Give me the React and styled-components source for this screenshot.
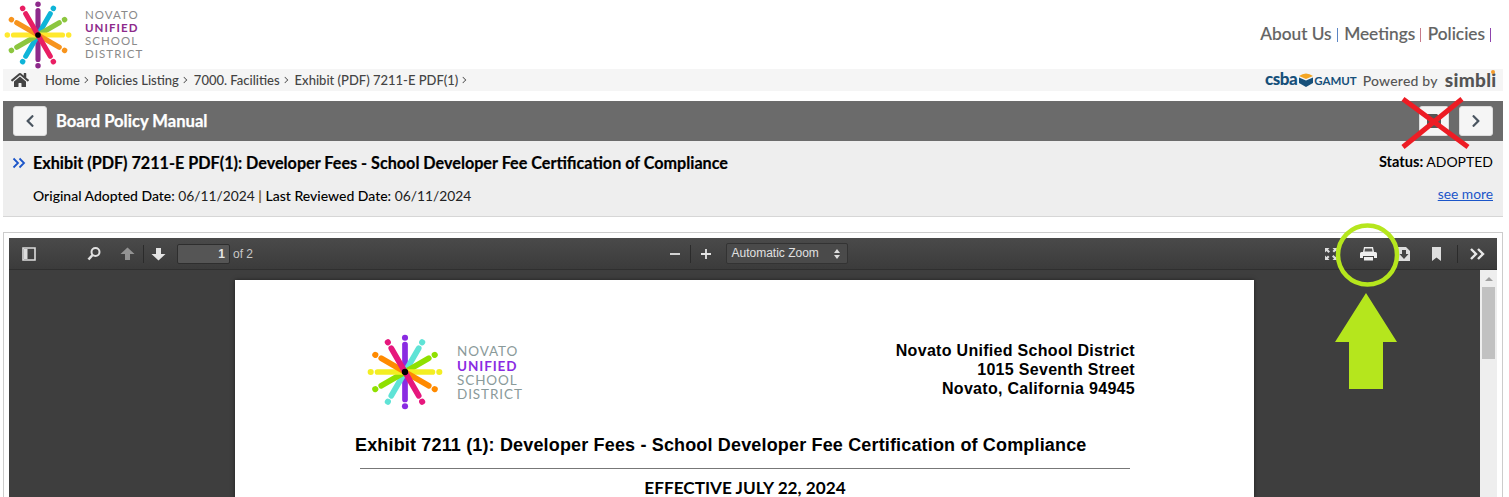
import styled, { createGlobalStyle } from 'styled-components';
import { FaHome, FaChevronLeft, FaChevronRight } from 'react-icons/fa';

const GlobalStyle = createGlobalStyle`
  html, body {
    margin: 0;
    height: 497px;
    overflow: hidden;
    background: #fff;
    font-family: 'Lato', 'Liberation Sans', sans-serif;
  }
`;

const Page = styled.div`
  position: relative;
  width: 1509px;
  height: 497px;
  overflow: hidden;
  padding: 0 6px 0 3px;
  box-sizing: border-box;
`;

const Header = styled.header`
  height: 69px;
  display: flex;
  justify-content: space-between;
  align-items: center;
  padding: 0 12px 0 1px;
`;

const LogoWrap = styled.div`
  display: flex;
  align-items: center;
  gap: ${(p) => p.$gap}px;
`;

const LogoText = styled.div`
  font-family: 'Lato', sans-serif;
  font-size: ${(p) => p.$size}px;
  line-height: ${(p) => p.$line}px;
  letter-spacing: ${(p) => p.$track}px;
  color: ${(p) => p.$color};
  margin-top: ${(p) => p.$shift}px;
  span {
    display: block;
    font-weight: 700;
    color: ${(p) => p.$accent};
  }
`;

const Nav = styled.nav`
  display: flex;
  align-items: center;
  font-size: 17.3px;
  font-weight: 500;
  color: #636363;
  padding-bottom: 2px;
  -webkit-text-stroke: 0.15px #636363;
`;

const NavSep = styled.i`
  display: inline-block;
  width: 1px;
  height: 14px;
  margin: 2px 6.5px 0 5px;
  background: ${(p) => p.$color};
  &:last-child {
    margin-right: 0;
  }
`;

const Crumbs = styled.div`
  height: 22px;
  background: #f5f5f5;
  display: flex;
  align-items: center;
  justify-content: space-between;
  padding: 0 6.5px 0 8px;
  font-size: 13px;
  font-weight: 500;
  color: #444;
`;

const CrumbList = styled.div`
  display: flex;
  align-items: center;
  svg {
    color: #444;
  }
`;

const CrumbLinks = styled.div`
  display: flex;
  align-items: center;
  margin-left: 16px;
`;

const CrumbArrow = styled.span`
  width: 6px;
  height: 6px;
  margin: 0 7px 0 2px;
  transform: scale(0.75) rotate(45deg);
  border-top: 1.5px solid #444;
  border-right: 1.5px solid #444;
  box-sizing: border-box;
`;

const Brand = styled.div`
  display: flex;
  align-items: center;
`;

const Csba = styled.span`
  font-size: 17px;
  font-weight: 900;
  color: #17507a;
  letter-spacing: -0.5px;
  line-height: 16px;
  padding-bottom: 3px;
`;

const Gamut = styled.span`
  font-size: 11.5px;
  font-weight: 700;
  color: #17507a;
`;

const Powered = styled.span`
  font-size: 14px;
  font-weight: 500;
  color: #555;
  letter-spacing: 0.2px;
  margin-left: 6px;
`;

const Simbli = styled.span`
  position: relative;
  font-size: 19px;
  line-height: 18px;
  font-weight: 900;
  color: #555;
  margin-left: 7px;
  letter-spacing: 0.3px;
`;

const SimbliDot = styled.span`
  position: absolute;
  right: 2px;
  top: -1px;
  width: 4px;
  height: 4px;
  border-radius: 50%;
  background: #f39c2d;
`;

const TitleBar = styled.div`
  margin-top: 10px;
  height: 40px;
  background: #6b6b6b;
  display: flex;
  align-items: center;
  justify-content: space-between;
  padding: 0 10px;
`;

const BarGroup = styled.div`
  display: flex;
  align-items: center;
  gap: ${(p) => p.$gap}px;
`;

const SquareButton = styled.button`
  width: ${(p) => p.$w || 34}px;
  height: 30px;
  padding: 0;
  display: flex;
  align-items: center;
  justify-content: center;
  background: #f5f5f5;
  border: 1px solid #ddd;
  border-radius: 3px;
  color: #4a5560;
  font-size: 14px;
`;

const BarTitle = styled.h1`
  margin: 0;
  font-size: 16.6px;
  font-weight: 700;
  color: #fff;
  -webkit-text-stroke: 0.25px #fff;
`;

const Info = styled.section`
  height: 76px;
  box-sizing: border-box;
  background: #eee;
  border-bottom: 1px solid #d6d6d6;
  padding: 12px 10px 0 9px;
  display: grid;
  grid-template-columns: 1fr auto;
  grid-template-rows: 34px auto;
  color: #000;
`;

const InfoTitle = styled.div`
  display: flex;
  align-items: center;
  height: 19px;
  font-size: 16.18px;
  font-weight: 700;
  -webkit-text-stroke: 0.2px #000;
  svg {
    margin-right: 7px;
  }
`;

const Status = styled.div`
  font-size: 14px;
  line-height: 17px;
  text-align: right;
  b {
    font-size: 14.6px;
    font-weight: 700;
  }
`;

const DateLine = styled.div`
  padding-left: 21px;
  font-size: 13.8px;
  color: #222;
  b {
    font-size: 14px;
    font-weight: 500;
    color: #000;
  }
  i {
    font-style: normal;
    font-weight: 700;
    color: #7a5a1e;
  }
`;

const SeeMore = styled.a`
  margin-top: -2px;
  font-size: 13.8px;
  color: #1b55c9;
  text-decoration: underline;
  text-align: right;
`;

const Frame = styled.div`
  margin-top: 15px;
  height: 280px;
  box-sizing: border-box;
  border: 1px solid #ccc;
  padding: 5px;
`;

const Viewer = styled.div`
  height: 100%;
  display: grid;
  grid-template-rows: 32px 1fr;
  background: #3e3e3e;
`;

const Toolbar = styled.div`
  display: grid;
  grid-template-columns: 1fr auto 1fr;
  align-items: center;
  background: linear-gradient(#4a4a4a, #3b3b3b);
  border-bottom: 1px solid #2f2f2f;
  box-sizing: border-box;
  color: #d9d9d9;
  font-family: 'Liberation Sans', sans-serif;
  font-size: 12px;
`;

const ToolGroup = styled.div`
  display: flex;
  align-items: center;
  justify-content: ${(p) => p.$end ? 'flex-end' : 'flex-start'};
  padding: ${(p) => p.$end ? '0 10px 0 0' : '0'};
`;

const CenterGroup = styled(ToolGroup)`
  margin-left: 6px;
`;

const ToolIcon = styled.span`
  display: flex;
  justify-content: center;
  width: ${(p) => p.$w || 20}px;
  margin-left: ${(p) => p.$ml || 0}px;
  opacity: ${(p) => p.$dim ? 0.5 : 1};
`;

const ToolDivider = styled.span`
  width: 1px;
  height: 18px;
  margin-left: ${(p) => p.$ml || 0}px;
  background: #2b2b2b;
`;

const PageInput = styled.span`
  width: 53px;
  height: 20px;
  margin-left: 9px;
  box-sizing: border-box;
  border: 1px solid #2e2e2e;
  border-radius: 2px;
  background: #555;
  text-align: right;
  line-height: 18px;
  padding-right: 4px;
  font-weight: 700;
  color: #e6e6e6;
`;

const PageCount = styled.span`
  margin-left: 3px;
  color: #c8c8c8;
`;

const ZoomSelect = styled.span`
  width: 122px;
  height: 21px;
  margin-left: 10px;
  box-sizing: border-box;
  border: 1px solid #333;
  border-radius: 2px;
  background: #4a4a4a;
  line-height: 19px;
  padding-left: 5px;
  display: flex;
  justify-content: space-between;
  padding-right: 7px;
  align-items: center;
  color: #e0e0e0;
`;

const Canvas = styled.div`
  display: flex;
  min-height: 0;
  overflow: hidden;
`;

const CanvasArea = styled.div`
  flex: 1;
  padding: 10px 226px 0 226px;
  min-width: 0;
`;

const Sheet = styled.div`
  height: 400px;
  background: #fff;
  box-shadow: 0 0 4px rgba(0, 0, 0, 0.5);
  padding: 54px 119px 0 120px;
  color: #000;
  font-family: 'Liberation Sans', sans-serif;
`;

const SheetTop = styled.div`
  display: flex;
  justify-content: space-between;
  align-items: flex-start;
  margin-left: 11.5px;
`;

const Address = styled.div`
  font-size: 16px;
  font-weight: 700;
  line-height: 19px;
  text-align: right;
  padding-top: 7px;
  letter-spacing: 0.3px;
`;

const SheetHeading = styled.h2`
  margin: 25px 0 0;
  font-size: 18px;
  font-weight: 700;
  line-height: 20px;
  letter-spacing: 0.16px;
  white-space: nowrap;
`;

const Rule = styled.hr`
  margin: 13px 5px 0;
  border: 0;
  border-top: 1px solid #777;
`;

const Effective = styled.div`
  margin-top: 8px;
  text-align: center;
  font-family: 'Lato', sans-serif;
  font-size: 17.2px;
  font-weight: 700;
`;

const ScrollTrack = styled.div`
  width: 17px;
  background: #eee;
  display: flex;
  flex-direction: column;
  align-items: center;
  padding-top: 7px;
  box-sizing: border-box;
`;

const ScrollArrow = styled.span`
  width: 0;
  height: 0;
  border-left: 4px solid transparent;
  border-right: 4px solid transparent;
  border-bottom: 4px solid #a0a0a0;
`;

const ScrollThumb = styled.span`
  width: 13px;
  height: 72px;
  margin-top: 6px;
  background: #c1c1c1;
`;

const Markup = styled.svg`
  position: absolute;
  left: 0;
  top: 0;
  pointer-events: none;
`;

const spokeColors = {
  top: ['#8e2a8b', '#0eb4d8', '#8cc63f', '#ffe92e', '#f7941d', '#e91e63'],
  sheet: ['#8a2be2', '#5fe3d6', '#8fe000', '#f3ee22', '#ff8a00', '#e6177d'],
};

const Logo = ({ size, colors }) => (
  <svg width={size} height={size} viewBox="-36 -36 72 72">
    {colors.map((c, i) => (
      <g key={c} transform={`rotate(${i * 30})`}>
        <line x1="0" y1="-26" x2="0" y2="26" stroke={c} strokeWidth="5.4" strokeLinecap="round" />
        <circle cx="0" cy="-32.5" r="2.9" fill={c} />
        <circle cx="0" cy="32.5" r="2.9" fill={c} />
      </g>
    ))}
    <circle r="3" fill="#000" />
  </svg>
);

const Shield = () => (
  <svg width="16" height="16" viewBox="0 0 16 16" style={{ margin: '0 0 0 1px' }}>
    <path d="M1 4 Q8 -1 15 4 L8 7 Z" fill="#f5a623" />
    <path d="M1 5.5 L8 8.5 L15 5.5 V11 L8 15 L1 11 Z" fill="#17507a" />
  </svg>
);

const SidebarIcon = () => (
  <svg width="14" height="14" viewBox="0 0 14 14">
    <path d="M1 1h12v12H1z" fill="none" stroke="#ddd" strokeWidth="1.6" />
    <path d="M2 2h3.5v10H2z" fill="#ddd" />
  </svg>
);

const SearchIcon = () => (
  <svg width="16" height="16" viewBox="0 0 16 16">
    <circle cx="9.5" cy="6" r="4" fill="none" stroke="#e2e2e2" strokeWidth="2" />
    <path d="M6.5 9 L2.5 13.5" stroke="#e2e2e2" strokeWidth="2.6" />
  </svg>
);

const ArrowIcon = ({ down }) => (
  <svg width="15" height="14" viewBox="0 0 15 14">
    <path
      d={down ? 'M5 1h5v6h4.5L7.5 13.5 .5 7H5z' : 'M5 13h5V7h4.5L7.5 .5 .5 7H5z'}
      fill="#e4e4e4"
    />
  </svg>
);

const FullscreenIcon = () => (
  <svg width="14" height="14" viewBox="0 0 14 14">
    <path d="M1 1h4.500L4 2.500 6 4.500 4.500 6 2.500 4 1 5.500zM13 13H8.500L10 11.500 8 9.500 9.500 8l2 2L13 8.500z" fill="#ddd" />
    <path d="M13 1v4.500L11.500 4 10 5.500 8.500 4 10 2.500 8.500 1zM1 13V8.500L2.500 10 4 8.500 5.500 10 4 11.500 5.500 13z" fill="#ddd" />
  </svg>
);

const PrintIcon = () => (
  <svg width="17" height="14" viewBox="0 0 17 14">
    <path d="M4 0h9l1 5H3z" fill="#eee" />
    <path d="M5 1.500h7l.5 3h-8z" fill="#555" />
    <path d="M1.500 5h14A1.500 1.500 0 0 1 17 6.500V11h-3V9H3v2H0V6.500A1.500 1.500 0 0 1 1.500 5z" fill="#eee" />
    <path d="M4 10h9v3.500H4z" fill="#eee" />
  </svg>
);

const DownloadIcon = () => (
  <svg width="14" height="14" viewBox="0 0 14 14">
    <path d="M1 0h8l4 4v10H1z" fill="#ddd" />
    <path d="M5 3h4v4h2.500L7 12 2.500 7H5z" fill="#444" />
  </svg>
);

const BookmarkIcon = () => (
  <svg width="10" height="14" viewBox="0 0 10 14">
    <path d="M0 0h9v14L4.500 10.500 0 14z" fill="#ddd" />
  </svg>
);

const MoreIcon = () => (
  <svg width="15" height="12" viewBox="0 0 15 12">
    <path d="M1 1l5 5-5 5M8 1l5 5-5 5" fill="none" stroke="#e8e8e8" strokeWidth="2.400" />
  </svg>
);

const App = () => (
  <Page>
    <GlobalStyle />
    <Header>
      <LogoWrap $gap={13}>
        <Logo size={68} colors={spokeColors.top} />
        <LogoText $size={11.5} $line={13} $track={1.05} $shift={-2} $color="#8a8a8a" $accent="#8e2a8b">
          NOVATO
          <span>UNIFIED</span>
          SCHOOL<br />DISTRICT
        </LogoText>
      </LogoWrap>
      <Nav>
        About Us<NavSep $color="#5b86c4" />
        Meetings<NavSep $color="#c77a8a" />
        Policies<NavSep $color="#8e44ad" />
      </Nav>
    </Header>

    <Crumbs>
      <CrumbList>
        <FaHome size={18} />
        <CrumbLinks>
          Home<CrumbArrow />
          Policies Listing<CrumbArrow />
          7000. Facilities<CrumbArrow />
          Exhibit (PDF) 7211-E PDF(1)<CrumbArrow />
        </CrumbLinks>
      </CrumbList>
      <Brand>
        <Csba>csba</Csba>
        <Shield />
        <Gamut>GAMUT</Gamut>
        <Powered>Powered by</Powered>
        <Simbli>simbli<SimbliDot /></Simbli>
      </Brand>
    </Crumbs>

    <TitleBar>
      <BarGroup $gap={9}>
        <SquareButton><FaChevronLeft /></SquareButton>
        <BarTitle>Board Policy Manual</BarTitle>
      </BarGroup>
      <BarGroup $gap={10}>
        <SquareButton $w={30}>
          <svg width="16" height="16" viewBox="0 0 16 16">
            <path d="M1 1h10l4 4v10H1z" fill="#555" />
          </svg>
        </SquareButton>
        <SquareButton><FaChevronRight /></SquareButton>
      </BarGroup>
    </TitleBar>

    <Info>
      <InfoTitle>
        <svg width="14" height="12" viewBox="0 0 14 12">
          <path d="M1.500 1.500L6 6l-4.500 4.500M7.500 1.500L12 6l-4.500 4.500" fill="none" stroke="#1b55c9" strokeWidth="1.800" />
        </svg>
        Exhibit (PDF) 7211-E PDF(1): Developer Fees - School Developer Fee Certification of Compliance
      </InfoTitle>
      <Status><b>Status:</b> ADOPTED</Status>
      <DateLine>
        <b>Original Adopted Date:</b> 06/11/2024 <i>|</i> <b>Last Reviewed Date:</b> 06/11/2024
      </DateLine>
      <SeeMore>see more</SeeMore>
    </Info>

    <Frame>
      <Viewer>
        <Toolbar>
          <ToolGroup>
            <ToolIcon $ml={10}><SidebarIcon /></ToolIcon>
            <ToolIcon $ml={45}><SearchIcon /></ToolIcon>
            <ToolIcon $ml={13} $dim><ArrowIcon /></ToolIcon>
            <ToolDivider $ml={6} />
            <ToolIcon $ml={4}><ArrowIcon down /></ToolIcon>
            <PageInput>1</PageInput>
            <PageCount>of 2</PageCount>
          </ToolGroup>
          <CenterGroup>
            <ToolIcon>
              <svg width="12" height="12" viewBox="0 0 12 12"><path d="M1 6h10" stroke="#e4e4e4" strokeWidth="1.800" /></svg>
            </ToolIcon>
            <ToolDivider $ml={5} />
            <ToolIcon $ml={5}>
              <svg width="12" height="12" viewBox="0 0 12 12"><path d="M1 6h10M6 1v10" stroke="#e4e4e4" strokeWidth="1.800" /></svg>
            </ToolIcon>
            <ZoomSelect>
              Automatic Zoom
              <svg width="6" height="10" viewBox="0 0 6 10"><path d="M3 0l3 4H0zM3 10L0 6h6z" fill="#ddd" /></svg>
            </ZoomSelect>
          </CenterGroup>
          <ToolGroup $end>
            <ToolIcon><FullscreenIcon /></ToolIcon>
            <ToolIcon $ml={17}><PrintIcon /></ToolIcon>
            <ToolIcon $ml={16}><DownloadIcon /></ToolIcon>
            <ToolIcon $ml={13}><BookmarkIcon /></ToolIcon>
            <ToolDivider $ml={10} />
            <ToolIcon $ml={9}><MoreIcon /></ToolIcon>
          </ToolGroup>
        </Toolbar>
        <Canvas>
          <CanvasArea>
            <Sheet>
              <SheetTop>
                <LogoWrap $gap={14.5}>
                  <Logo size={76} colors={spokeColors.sheet} />
                  <LogoText $size={13.5} $line={14.300} $track={0.9} $shift={2} $color="#8a9a9a" $accent="#8a2be2">
                    NOVATO
                    <span>UNIFIED</span>
                    SCHOOL<br />DISTRICT
                  </LogoText>
                </LogoWrap>
                <Address>
                  Novato Unified School District<br />
                  1015 Seventh Street<br />
                  Novato, California 94945
                </Address>
              </SheetTop>
              <SheetHeading>Exhibit 7211 (1): Developer Fees - School Developer Fee Certification of Compliance</SheetHeading>
              <Rule />
              <Effective>EFFECTIVE JULY 22, 2024</Effective>
            </Sheet>
          </CanvasArea>
          <ScrollTrack>
            <ScrollArrow />
            <ScrollThumb />
          </ScrollTrack>
        </Canvas>
      </Viewer>
    </Frame>

    <Markup width="1509" height="497" viewBox="0 0 1509 497">
      <path d="M1403 99L1468 147M1462 99L1403 147" stroke="#ed1c24" strokeWidth="5" />
      <circle cx="1367.500" cy="255" r="29.500" fill="none" stroke="#b5e61d" strokeWidth="4.500" />
      <path d="M1366 293L1397 342H1383V389H1349V342H1335Z" fill="#b5e61d" />
    </Markup>
  </Page>
);

export default App;
